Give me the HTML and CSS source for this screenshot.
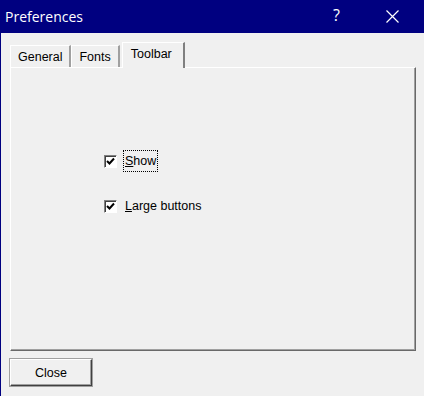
FILE: index.html
```html
<!DOCTYPE html>
<html lang="en">
<head>
    <meta charset="UTF-8">
    <title>Preferences</title>
    <link rel="stylesheet" href="styles.css">
</head>
<body>
    <div class="window">
        <!-- Title bar -->
        <div class="titlebar">
            <span class="title">Preferences</span>
            <span class="help">?</span>
            <span class="close-x">
                <svg width="13" height="13" viewBox="0 0 13 13">
                    <path d="M0.5 0.5 L12.5 12.5 M12.5 0.5 L0.5 12.5" stroke="#fff" stroke-width="1.2" fill="none"/>
                </svg>
            </span>
        </div>

        <div class="content">
            <!-- Tabs -->
            <div class="tabs">
                <div class="tab">General</div>
                <div class="tab">Fonts</div>
                <div class="tab active">Toolbar</div>
            </div>

            <div class="panel">
                <div class="options">
                    <label class="option">
                        <span class="checkbox"><svg width="9" height="9" viewBox="0 0 9 9"><path d="M1 4 L3.5 6.5 L8 1.5" stroke="#000" stroke-width="2" fill="none"/></svg></span>
                        <span class="label focused"><u>S</u>how</span>
                    </label>
                    <label class="option">
                        <span class="checkbox"><svg width="9" height="9" viewBox="0 0 9 9"><path d="M1 4 L3.5 6.5 L8 1.5" stroke="#000" stroke-width="2" fill="none"/></svg></span>
                        <span class="label"><u>L</u>arge buttons</span>
                    </label>
                </div>
            </div>

            <div class="footer">
                <button class="button">Close</button>
            </div>
        </div>
    </div>
</body>
</html>
```

FILE: styles.css
```css
* {
    margin: 0;
    padding: 0;
    box-sizing: border-box;
}

body {
    font-family: 'Liberation Sans', Arial, sans-serif;
    font-size: 12.5px;
    color: #000;
    background-color: #f0f0f0;
}

.window {
    width: 424px;
    height: 396px;
    display: flex;
    flex-direction: column;
    border-left: 1px solid #000080;
    background-color: #f0f0f0;
}

.titlebar {
    height: 33px;
    background-color: #000080;
    color: white;
    display: flex;
    align-items: center;
    padding-left: 5px;
    margin-left: -1px;
}

.title {
    font-family: 'Open Sans', 'Liberation Sans', sans-serif;
    font-size: 14px;
    flex: 1;
}

.help {
    font-family: 'Open Sans', 'Liberation Sans', sans-serif;
    font-size: 16px;
    margin-right: 46px;
    margin-top: -4px;
}

.close-x {
    display: flex;
    margin-right: 25px;
}

.content {
    flex: 1;
    padding: 9px 8px 0 9px;
    display: flex;
    flex-direction: column;
}

.tabs {
    display: flex;
    align-items: flex-end;
    height: 25px;
    position: relative;
    z-index: 1;
}

.tab {
    height: 22px;
    padding: 4px 7px 0 7px;
    border-top: 1px solid #fff;
    border-left: 1px solid #fff;
    border-right: 2px solid #a0a0a0;
    background-color: #f0f0f0;
    line-height: 15px;
}

.tab.active {
    height: 26px;
    margin-bottom: -1px;
    padding: 4px 11px 0 8px;
    margin-left: 2px;
    border-right: 2px solid #808080;
}

.panel {
    height: 284px;
    border-top: 1px solid #fff;
    border-left: 1px solid #fff;
    border-right: 1px solid #696969;
    border-bottom: 1px solid #696969;
    box-shadow: inset -1px -1px 0 #a0a0a0;
    padding: 84px 0 0 93px;
}

.options {
    display: flex;
    flex-direction: column;
    gap: 27px;
}

.option {
    display: flex;
    align-items: center;
    gap: 7px;
    height: 18px;
}

.checkbox {
    width: 13px;
    height: 13px;
    background-color: #fff;
    border: 1px solid;
    border-color: #808080 #fff #fff #808080;
    box-shadow: inset 1px 1px 0 #404040;
    display: flex;
    align-items: center;
    justify-content: center;
}

.label {
    padding: 2px 1px;
    line-height: 16px;
}

.label.focused {
    outline: 1px dotted #000;
    outline-offset: 0;
}

.footer {
    padding-top: 8px;
}

.button {
    width: 82px;
    height: 27px;
    font-family: 'Liberation Sans', Arial, sans-serif;
    font-size: 12.5px;
    background-color: #f0f0f0;
    border: 1px solid;
    border-color: #fff #404040 #404040 #fff;
    box-shadow: inset -1px -1px 0 #a0a0a0, 0 0 0 1px #a0a0a0;
}
```
